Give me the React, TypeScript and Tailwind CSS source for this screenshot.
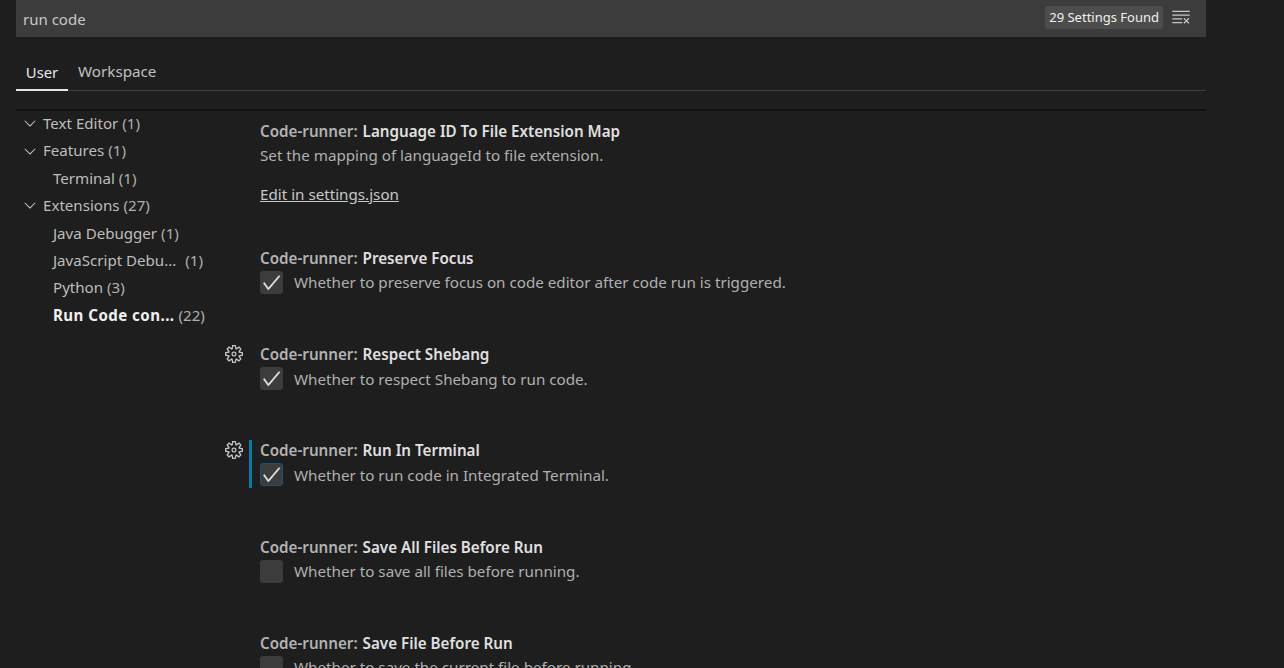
import { VscChevronDown, VscCheck, VscClearAll, VscSettingsGear } from 'react-icons/vsc';

const FONT = "font-['Noto_Sans',sans-serif]";

interface TreeItem {
  label: string;
  count: string;
  indent?: boolean;
  active?: boolean;
  gap?: string;
}

const TREE: TreeItem[] = [
  { label: 'Text Editor', count: '(1)' },
  { label: 'Features', count: '(1)' },
  { label: 'Terminal', count: '(1)', indent: true },
  { label: 'Extensions', count: '(27)' },
  { label: 'Java Debugger', count: '(1)', indent: true },
  { label: 'JavaScript Debu...', count: '(1)', indent: true, gap: 'ml-[9px]' },
  { label: 'Python', count: '(3)', indent: true },
  { label: 'Run Code con...', count: '(22)', indent: true, active: true },
];

function Checkbox({ checked, focused }: { checked?: boolean; focused?: boolean }) {
  return (
    <div
      className={`w-[23px] h-[23px] shrink-0 rounded-[3px] bg-[#3c3c3c] flex items-center justify-center ${
        focused ? 'border border-[#15557f]' : ''
      }`}
    >
      {checked && <VscCheck size={21} className="text-[#e8e8e8] stroke-[0.4px]" />}
    </div>
  );
}

function BoolRow(props: {
  name: string;
  desc: string;
  checked?: boolean;
  gear?: boolean;
  focused?: boolean;
}) {
  return (
    <div className="flex h-[96.25px]">
      <div className="w-[24px] shrink-0 pt-[2px]">
        {props.gear && <VscSettingsGear size={18} className="text-[#c5c5c5]" />}
      </div>
      <div className={`w-[3px] h-[48px] shrink-0 mt-[1px] ${props.focused ? 'bg-[#007fac]' : ''}`} />
      <div className="pl-[8px]">
        <div className="text-[15.2px] leading-[22px] text-[#b3b3b3] font-semibold">
          Code-runner: <span className="ml-[1px] text-[#e0e0e0]">{props.name}</span>
        </div>
        <div className="flex items-center gap-[11px] mt-[2px]">
          <Checkbox checked={props.checked} focused={props.focused} />
          <span className="text-[15.2px] leading-[22px] text-[#b0b0b0] whitespace-nowrap">{props.desc}</span>
        </div>
      </div>
    </div>
  );
}

export default function App() {
  return (
    <div className={`${FONT} h-[668px] w-[1284px] overflow-hidden bg-[#1e1e1e] text-[#cccccc]`}>
      <div className="w-[1190px] ml-[16px]">
        {/* search */}
        <div className="h-[37px] bg-[#3c3c3c] flex items-center pl-[7px] pr-[15px]">
          <span className="mt-px text-[15px] text-[#c8c8c8]">run code</span>
          <span className="ml-auto mb-[3px] text-[13px] leading-[23px] px-[4px] rounded-[3px] bg-[#4d4d4d] text-[#f0f0f0]">
            29 Settings Found
          </span>
          <VscClearAll size={20} className="ml-[8px] mb-[3px] text-[#c5c5c5]" />
        </div>

        {/* tabs */}
        <div className="h-[54px] flex items-end border-b border-[#3f3f3f]">
          <div className="h-[36px] w-[52px] -mb-px border-b-2 border-[#e7e7e7] text-center text-[14.8px] leading-[34px] text-[#e7e7e7]">
            User
          </div>
          <div className="h-[36px] ml-[10px] text-[15.2px] leading-[34px] text-[#c0c0c0]">Workspace</div>
        </div>

        {/* list header shadow */}
        <div className="h-[2px] mt-[18px] bg-[#121212]" />

        <div className="flex">
          {/* toc */}
          <div className="w-[209px] shrink-0 -mt-[1.4px]">
            {TREE.map(item => (
              <div
                key={item.label}
                className={`h-[27.4px] flex items-center text-[15.1px] whitespace-nowrap ${
                  item.indent ? 'pl-[37px]' : 'pl-[5px]'
                } ${item.active ? 'text-[#f0f0f0] font-bold tracking-[0.45px]' : 'text-[#bdbdbd]'}`}
              >
                {!item.indent && <VscChevronDown size={18} className="mr-[4px] shrink-0 text-[#c5c5c5]" />}
                <span>{item.label}</span>
                <span className={`${item.gap ?? 'ml-[4px]'} font-normal tracking-normal text-[#b0b0b0]`}>{item.count}</span>
              </div>
            ))}
          </div>

          {/* settings */}
          <div className="flex-1 pt-[9px]">
            <div className="pl-[35px] h-[126.9px]">
              <div className="text-[15.2px] leading-[22px] text-[#b3b3b3] font-semibold">
                Code-runner: <span className="ml-[1px] text-[#e0e0e0]">Language ID To File Extension Map</span>
              </div>
              <div className="text-[15.2px] leading-[22px] mt-[2px] text-[#b0b0b0]">
                Set the mapping of languageId to file extension.
              </div>
              <div className="text-[15.2px] leading-[22px] mt-[17px] text-[#c8c8c8] underline">Edit in settings.json</div>
            </div>
            <BoolRow name="Preserve Focus" desc="Whether to preserve focus on code editor after code run is triggered." checked />
            <BoolRow name="Respect Shebang" desc="Whether to respect Shebang to run code." checked gear />
            <BoolRow name="Run In Terminal" desc="Whether to run code in Integrated Terminal." checked gear focused />
            <BoolRow name="Save All Files Before Run" desc="Whether to save all files before running." />
            <BoolRow name="Save File Before Run" desc="Whether to save the current file before running." />
          </div>
        </div>
      </div>
    </div>
  );
}
